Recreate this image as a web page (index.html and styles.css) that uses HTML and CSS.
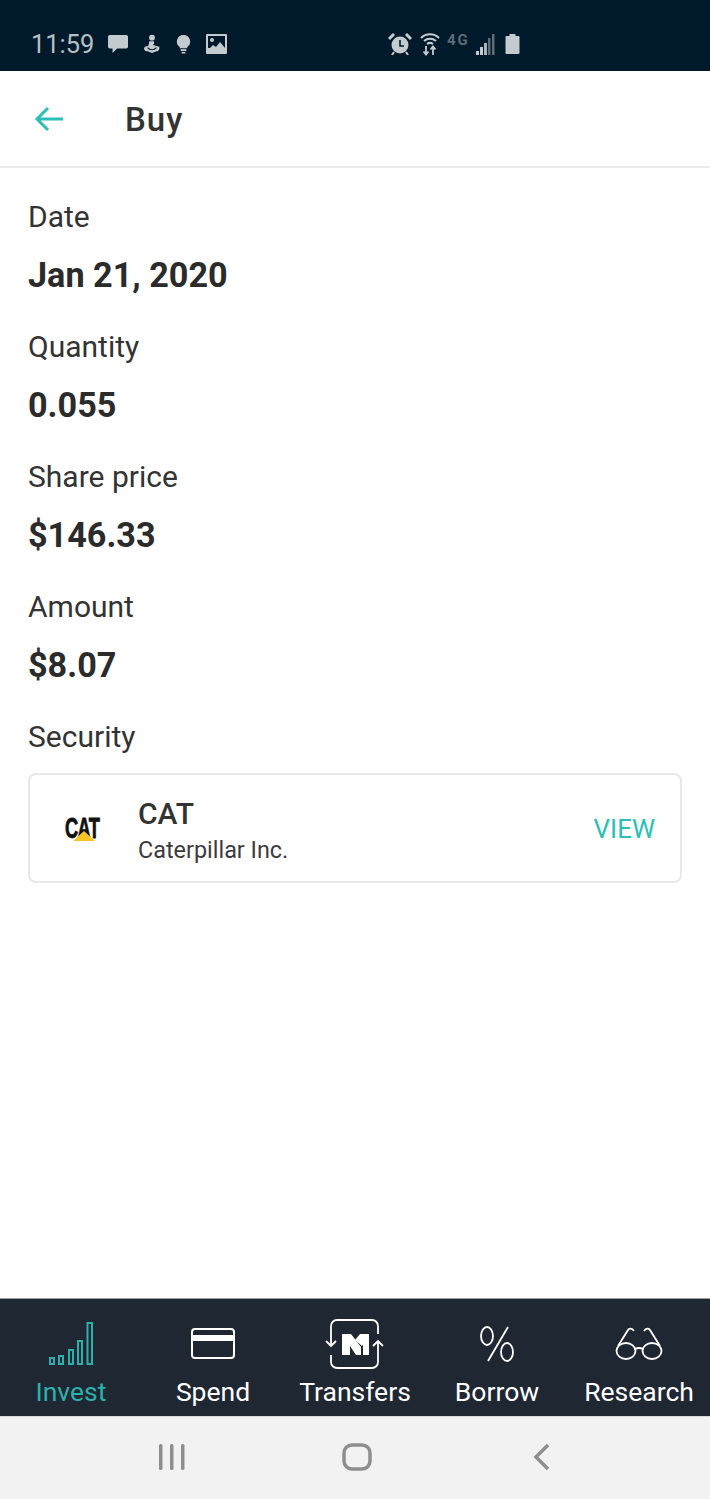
FILE: index.html
```html
<!DOCTYPE html>
<html lang="en">
<head>
    <meta charset="UTF-8">
    <meta name="viewport" content="width=device-width, initial-scale=1.0">
    <title>Buy</title>
    <link rel="stylesheet" href="styles.css">
</head>
<body>
    <div class="app">
        <div class="status-bar">
            <div class="status-left">
                <span class="clock">11:59</span>
                <svg width="22" height="20" viewBox="0 0 24 22"><path d="M3 1h18a2 2 0 0 1 2 2v11a2 2 0 0 1-2 2H11l-5 5v-5H3a2 2 0 0 1-2-2V3a2 2 0 0 1 2-2z" fill="#c3cbce"/></svg>
                <svg class="gap-a" width="18" height="20" viewBox="0 0 20 22"><circle cx="10" cy="4" r="3.2" fill="#c3cbce"/><path d="M7 8h5c1 2 0 3-1 4l7 2c1 3-1 5-3 5l-5 2-5-2c-3 0-5-2-3-5l4-1z" fill="#c3cbce"/><path d="M5 15c3 3 7 3 10 0" stroke="#001a2b" stroke-width="1.400" fill="none"/></svg>
                <svg class="gap-b" width="15" height="20" viewBox="0 0 16 21"><path d="M8 1a7 7 0 0 1 4 12.800V15H4v-1.200A7 7 0 0 1 8 1z" fill="#c3cbce"/><rect x="5" y="16" width="6" height="2" fill="#c3cbce"/><rect x="6" y="19" width="4" height="1.600" fill="#c3cbce"/></svg>
                <svg class="gap-c" width="21" height="20" viewBox="0 0 21 20"><path d="M1 0h19a1 1 0 0 1 1 1v18a1 1 0 0 1-1 1H1a1 1 0 0 1-1-1V1a1 1 0 0 1 1-1z" fill="#c3cbce"/><rect x="2" y="2" width="17" height="12" fill="#001a2b"/><circle cx="6" cy="6" r="2" fill="#c3cbce"/><path d="M2 16l5-5 3 2 4-5 5 6v4H2z" fill="#c3cbce"/></svg>
            </div>
            <div class="status-right">
                <svg width="24" height="22" viewBox="0 0 24 22"><circle cx="12" cy="12" r="8.500" fill="#c3cbce"/><path d="M12 7v6h4" stroke="#001a2b" stroke-width="1.600" fill="none"/><path d="M1 6l5-5M23 6l-5-5" stroke="#c3cbce" stroke-width="3"/><path d="M6 19l-2 3M18 19l2 3" stroke="#c3cbce" stroke-width="2"/></svg>
                <svg class="wifi" width="20" height="24" viewBox="0 0 20 24"><path d="M1 6c5-5 13-5 18 0M4 9c3.500-3 8.500-3 12 0M7 12c2-1.500 4-1.500 6 0" stroke="#c3cbce" stroke-width="2" fill="none"/><path d="M6 14v8M3.500 19.500L6 22.500l2.500-3M13 23v-8M10.500 17.500L13 14.500l2.500 3" stroke="#c3cbce" stroke-width="1.800" fill="none"/></svg>
                <span class="net">4G</span>
                <svg class="signal" width="19" height="21" viewBox="0 0 19 21"><rect x="0" y="17" width="3" height="4" fill="#c3cbce"/><rect x="4" y="13" width="3" height="8" fill="#c3cbce"/><rect x="8" y="9" width="3" height="12" fill="#aab3b7"/><rect x="12" y="4" width="2.500" height="17" fill="#5d6c75"/><rect x="16" y="0" width="2.500" height="21" fill="#5d6c75"/></svg>
                <svg class="battery" width="15" height="20" viewBox="0 0 14 20"><path d="M4 0h6v2h3a1 1 0 0 1 1 1v16a1 1 0 0 1-1 1H1a1 1 0 0 1-1-1V3a1 1 0 0 1 1-1h3z" fill="#c3cbce"/></svg>
            </div>
        </div>

        <header class="top-bar">
            <svg class="back" width="30" height="26" viewBox="0 0 30 26"><path d="M29 13H3M14 2L3 13l11 11" stroke="#2bbfb8" stroke-width="3" fill="none"/></svg>
            <h1>Buy</h1>
        </header>

        <main class="content">
            <div class="field">
                <div class="label">Date</div>
                <div class="value">Jan 21, 2020</div>
            </div>
            <div class="field">
                <div class="label">Quantity</div>
                <div class="value">0.055</div>
            </div>
            <div class="field">
                <div class="label">Share price</div>
                <div class="value">$146.33</div>
            </div>
            <div class="field">
                <div class="label">Amount</div>
                <div class="value">$8.07</div>
            </div>
            <div class="label">Security</div>
            <div class="card">
                <div class="logo">
                    <span class="logo-text">CAT</span>
                    <svg class="logo-mark" width="22" height="10" viewBox="0 0 22 10"><path d="M0 10L11 0l11 10z" fill="#f7c427"/></svg>
                </div>
                <div class="card-text">
                    <div class="ticker">CAT</div>
                    <div class="company">Caterpillar Inc.</div>
                </div>
                <a class="view">VIEW</a>
            </div>
        </main>

        <nav class="tabs">
            <div class="tab active">
                <div class="tab-icon">
                    <svg width="46" height="44" viewBox="0 0 46 44" fill="none" stroke="#2db0ab" stroke-width="2"><rect x="2" y="36" width="4" height="6"/><rect x="11" y="34" width="4" height="8"/><rect x="21" y="28" width="4" height="14"/><rect x="30" y="19" width="4" height="23"/><rect x="39.500" y="1" width="4.500" height="41"/></svg>
                </div>
                <span>Invest</span>
            </div>
            <div class="tab">
                <div class="tab-icon">
                    <svg width="44" height="32" viewBox="0 0 44 32" fill="none"><rect x="1" y="1" width="42" height="29" rx="3" stroke="#fff" stroke-width="2"/><rect x="1" y="7" width="42" height="6" fill="#fff"/></svg>
                </div>
                <span>Spend</span>
            </div>
            <div class="tab">
                <div class="tab-icon">
                    <svg width="60" height="50" viewBox="0 0 60 50" fill="none" stroke="#fff" stroke-width="1.800"><path d="M6 27V7a6 6 0 0 1 6-6h35a6 6 0 0 1 6 6v8"/><path d="M1 22l5 5 5-5"/><path d="M53 22v21a6 6 0 0 1-6 6H12a6 6 0 0 1-6-6v-7"/><path d="M48 27l5-5 5 5"/><path d="M17 15h9l10 13v8h-5l-6-9v9h-8z" fill="#fff" stroke="none"/><path d="M30 21l5-6h9v21h-6V25.500l-1 1.500z" fill="#fff" stroke="none"/></svg>
                </div>
                <span>Transfers</span>
            </div>
            <div class="tab">
                <div class="tab-icon">
                    <svg width="36" height="36" viewBox="0 0 36 36" fill="none" stroke="#fff" stroke-width="1.800"><ellipse cx="8" cy="10" rx="6" ry="9"/><ellipse cx="28" cy="26" rx="6" ry="9"/><path d="M29 1L9 35"/></svg>
                </div>
                <span>Borrow</span>
            </div>
            <div class="tab">
                <div class="tab-icon">
                    <svg width="48" height="36" viewBox="0 0 48 36" fill="none" stroke="#fff" stroke-width="1.800"><ellipse cx="11" cy="25" rx="9.500" ry="8"/><ellipse cx="37" cy="25" rx="9.500" ry="8"/><path d="M20 23c3-1.500 5-1.500 8 0"/><path d="M3 20L13 4c1-2 4-2 6 1"/><path d="M45 20L35 4c-1-2-4-2-6 1"/></svg>
                </div>
                <span>Research</span>
            </div>
        </nav>

        <div class="android-bar">
            <svg width="28" height="26" viewBox="0 0 28 26" fill="#8e8e8e"><rect x="1" y="0" width="3.500" height="26" rx="1.500"/><rect x="12" y="0" width="3.500" height="26" rx="1.500"/><rect x="23" y="0" width="3.500" height="26" rx="1.500"/></svg>
            <svg width="30" height="28" viewBox="0 0 30 28" fill="none"><rect x="2" y="2" width="26" height="24" rx="8" stroke="#8e8e8e" stroke-width="3.500"/></svg>
            <svg width="18" height="28" viewBox="0 0 18 28" fill="none"><path d="M15 2L3 14l12 12" stroke="#8e8e8e" stroke-width="3.500"/></svg>
        </div>
    </div>
</body>
</html>
```

FILE: styles.css
```css
* {
    margin: 0;
    padding: 0;
    box-sizing: border-box;
}
body {
    background: #fff;
    color: #2e2e2e;
    font-family: 'Roboto', sans-serif;
}
.app {
    width: 710px;
    height: 1499px;
    display: flex;
    flex-direction: column;
    overflow: hidden;
}
.status-bar {
    height: 71px;
    background: #001a2b;
    padding: 17px 0 0 31px;
    display: flex;
    align-items: flex-start;
}
.status-left {
    display: flex;
    align-items: center;
    height: 54px;
    width: 357px;
    flex-shrink: 0;
}
.clock {
    font-size: 25.4px;
    color: #b6c0c5;
    margin-right: 13px;
}
.gap-a {
    margin-left: 14px;
}
.gap-b {
    margin-left: 15px;
}
.gap-c {
    margin-left: 15px;
}
.status-right {
    display: flex;
    align-items: center;
    height: 54px;
}
.status-right svg {
    flex-shrink: 0;
}
.wifi {
    margin-left: 8px;
}
.net {
    width: 25px;
    font-size: 15px;
    font-weight: 700;
    letter-spacing: 2px;
    color: #5d6c75;
    margin: -8px 4px 0 7px;
}
.status-right .battery {
    margin-left: 10px;
}
.top-bar {
    height: 97px;
    border-bottom: 2px solid #ececec;
    display: flex;
    align-items: center;
    padding-left: 34px;
}
.top-bar h1 {
    font-size: 33px;
    font-weight: 500;
    letter-spacing: 1px;
    color: #333;
    margin: 2px 0 0 61px;
}
.content {
    flex: 1;
    padding: 31px 28px 0;
}
.field {
    height: 130px;
}
.label {
    font-size: 30px;
    line-height: 36px;
    color: #333;
}
.value {
    font-size: 34.2px;
    font-weight: 700;
    line-height: 40px;
    margin-top: 20px;
    color: #2b2b2b;
}
.card {
    height: 110px;
    margin-top: 18px;
    border: 2px solid #e8e8e8;
    border-radius: 8px;
    display: flex;
    align-items: center;
    padding: 0 25px 0 35px;
}
.logo {
    position: relative;
    width: 39px;
    height: 24px;
    margin-right: 34px;
    flex-shrink: 0;
}
.logo-text {
    display: block;
    width: 39px;
    font-family: 'Liberation Sans', sans-serif;
    font-size: 29px;
    font-weight: 700;
    line-height: 24px;
    letter-spacing: -1px;
    white-space: nowrap;
    color: #111;
    -webkit-text-stroke: 0.8px #111;
    transform: scaleX(0.63);
    transform-origin: left center;
}
.logo-mark {
    position: absolute;
    left: 8px;
    bottom: -1px;
}
.card-text {
    flex: 1;
    padding-top: 4px;
}
.ticker {
    font-size: 30px;
    font-weight: 500;
    line-height: 36px;
    color: #333;
}
.company {
    font-size: 23.4px;
    line-height: 30px;
    color: #3c3c3c;
    margin-top: 3px;
}
.view {
    font-size: 26px;
    color: #2bbfb8;
    margin-top: 2px;
}
.tabs {
    height: 118px;
    background: #1f2733;
    display: flex;
    border-top: 1px solid #9a9a9a;
}
.tab {
    width: 142px;
    height: 117px;
    display: flex;
    flex-direction: column;
    align-items: center;
    color: #fff;
    font-size: 26.5px;
    padding-top: 12px;
}
.tab-icon {
    height: 65px;
    display: flex;
    align-items: center;
    justify-content: center;
}
.tab span {
    line-height: 32px;
}
.tab.active {
    color: #2db0ab;
}
.android-bar {
    height: 83px;
    background: #f2f2f2;
    border-top: 1px solid #d6d8dc;
    display: flex;
    align-items: center;
    padding-left: 158px;
    padding-bottom: 2px;
}
.android-bar svg:nth-child(2) {
    margin-left: 156px;
}
.android-bar svg:nth-child(3) {
    margin-left: 161px;
}
```
